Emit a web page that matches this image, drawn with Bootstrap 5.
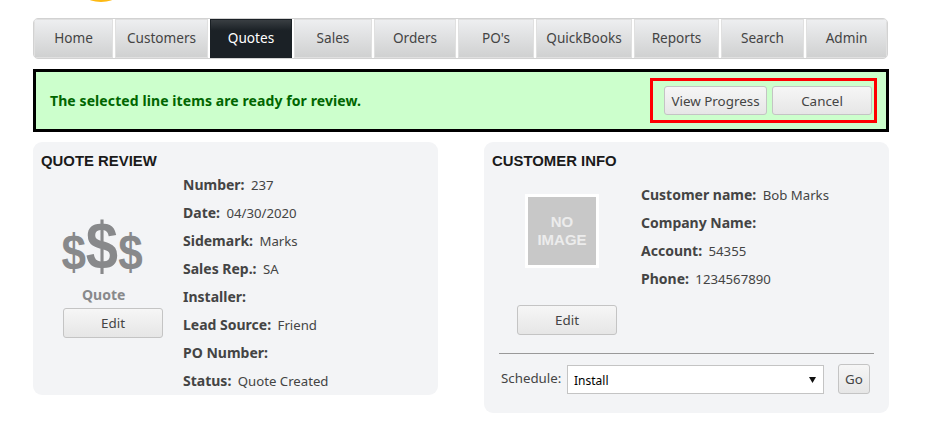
<!DOCTYPE html>
<html lang="en">
<head>
    <meta charset="UTF-8">
    <meta name="viewport" content="width=device-width, initial-scale=1.0">
    <title>Quote Review</title>
    <link href="https://cdn.jsdelivr.net/npm/bootstrap@5.3.0/dist/css/bootstrap.min.css" rel="stylesheet">
    <style>
        body {
            background-color: #fff;
            color: #444;
            font-family: "Noto Sans", "DejaVu Sans", sans-serif;
            font-size: 14px;
            overflow: hidden;
        }
        .page-wrap {
            width: 856px;
            margin-left: 33px;
        }
        .logo-strip {
            height: 18px;
            padding-left: 54px;
        }
        .logo-strip svg {
            display: block;
        }
        .main-menu {
            height: 41px;
            border: 1px solid #d2d2d2;
            border-radius: 5px;
            width: 855px;
            overflow: hidden;
        }
        .menu-item {
            display: flex;
            align-items: center;
            justify-content: center;
            color: #444;
            text-decoration: none;
            font-size: 13.6px;
            background: linear-gradient(#eeeff1, #cfd0d0);
            border-right: 2px solid #fff;
            box-shadow: inset 0 0 0 1px #e0e0e0;
        }
        .menu-item:last-child {
            border-right: 0;
        }
        .menu-item.is-current {
            background: linear-gradient(#3c4145, #1b2126 30%);
            color: #fff;
            box-shadow: inset 0 0 0 1px #1b2126;
        }
        .notice-bar {
            height: 63px;
            margin-top: 10px;
            border: 3px solid #000;
            background-color: #ccffcc;
            padding-left: 14px;
            padding-right: 9px;
        }
        .notice-text {
            color: #006600;
            font-weight: 700;
            font-size: 14px;
            letter-spacing: 0.09px;
        }
        .red-box {
            border: 3px solid #f00;
            width: 227px;
            height: 45px;
            padding-left: 11px;
            gap: 5px;
        }
        .grey-btn {
            background: linear-gradient(#f6f6f6, #e6e6e6);
            border: 1px solid #c4c4c4;
            border-radius: 3px;
            color: #444;
            font-size: 13.4px;
            padding: 0;
            height: 29px;
            line-height: 26px;
        }
        .btn-progress { width: 103px; }
        .btn-cancel { width: 100px; }
        .btn-edit { width: 100px; height: 30px; }
        .btn-go { width: 32px; height: 30px; }
        .panel-row {
            margin-top: 10px;
            gap: 46px;
        }
        .info-panel {
            width: 405px;
            flex: none;
            background-color: #f3f4f6;
            border-radius: 9px;
        }
        .panel-quote { height: 253px; padding: 11px 8px 0; }
        .panel-customer { height: 271px; padding: 11px 8px 0; }
        .panel-title {
            font-family: "Liberation Sans", Arial, sans-serif;
            font-weight: 700;
            font-size: 14.9px;
            line-height: 16px;
            color: #1a1a1a;
            margin: 0;
        }
        .side-col {
            width: 142px;
            flex: none;
        }
        .side-col-wide {
            width: 149px;
        }
        .money-mark {
            font-family: "Liberation Sans", Arial, sans-serif;
            font-weight: 700;
            color: #88898b;
            height: 68px;
            margin-top: 35px;
            margin-left: 11px;
            line-height: 68px;
            width: 100px;
            text-align: center;
            white-space: nowrap;
            transform: translateY(13px) scale(1, 1.15);
            transform-origin: bottom;
        }
        .money-small { font-size: 44px; }
        .money-big { font-size: 58px; }
        .quote-label {
            color: #88898b;
            font-weight: 700;
            font-size: 14px;
            margin: 15px 0 5px 41px;
            line-height: 16px;
        }
        .field-list {
            list-style: none;
            margin: 0;
            padding: 2px 0 0;
        }
        .field-list li {
            height: 28px;
            line-height: 28px;
            white-space: nowrap;
            font-size: 13.2px;
        }
        .field-list b {
            font-size: 14px;
            margin-right: 3px;
        }
        .customer-fields {
            padding-top: 4px;
        }
        .no-image {
            width: 74px;
            height: 74px;
            border: 3px solid #fff;
            background-color: #c8c8c8;
            color: #ececec;
            font-family: "Liberation Sans", Arial, sans-serif;
            font-weight: 700;
            font-size: 15px;
            line-height: 18px;
            margin: 17px 0 0 33px;
        }
        .edit-quote {
            margin-left: 22px;
        }
        .edit-customer {
            margin: 37px 0 0 25px;
        }
        .rule-line {
            margin: 18px 7px 0;
            border-top: 1px solid #999;
            opacity: 1;
        }
        .schedule-row {
            margin: 10px 11px 0 9px;
            font-size: 13.3px;
        }
        .schedule-label {
            width: 66px;
            flex: none;
            align-self: center;
        }
        .sched-select {
            appearance: none;
            width: 257px;
            height: 29px;
            border: 1px solid #c4c4c4;
            background: #fff url("data:image/svg+xml,%3Csvg xmlns='http://www.w3.org/2000/svg' width='7' height='7'%3E%3Cpath d='M0 1h7L3.5 7z' fill='%23111'/%3E%3C/svg%3E") no-repeat right 7px center;
            color: #000;
            font-family: "Noto Sans", sans-serif;
            font-size: 12px;
            padding: 3px 8px 0 6px;
        }
    </style>
</head>
<body>
    <div class="page-wrap">
        <div class="logo-strip">
            <svg width="28" height="2" viewBox="0 0 28 2"><ellipse cx="14" cy="-3" rx="14" ry="5" fill="#fdb913"/></svg>
        </div>

        <nav class="main-menu d-flex">
            <a class="menu-item" href="#" style="width:81px">Home</a>
            <a class="menu-item" href="#" style="width:95px">Customers</a>
            <a class="menu-item is-current" href="#" style="width:84px">Quotes</a>
            <a class="menu-item" href="#" style="width:80px">Sales</a>
            <a class="menu-item" href="#" style="width:84px">Orders</a>
            <a class="menu-item" href="#" style="width:78px">PO's</a>
            <a class="menu-item" href="#" style="width:98px">QuickBooks</a>
            <a class="menu-item" href="#" style="width:87px">Reports</a>
            <a class="menu-item" href="#" style="width:85px">Search</a>
            <a class="menu-item" href="#" style="width:81px">Admin</a>
        </nav>

        <div class="notice-bar d-flex align-items-center justify-content-between">
            <span class="notice-text">The selected line items are ready for review.</span>
            <div class="red-box d-flex align-items-center">
                <button type="button" class="btn grey-btn btn-progress">View Progress</button>
                <button type="button" class="btn grey-btn btn-cancel">Cancel</button>
            </div>
        </div>

        <div class="panel-row d-flex align-items-start">
            <section class="info-panel panel-quote">
                <h2 class="panel-title">QUOTE REVIEW</h2>
                <div class="d-flex">
                    <div class="side-col">
                        <div class="money-mark"><span class="money-small">$</span><span class="money-big">$</span><span class="money-small">$</span></div>
                        <div class="quote-label">Quote</div>
                        <button type="button" class="btn grey-btn btn-edit edit-quote d-block">Edit</button>
                    </div>
                    <ul class="field-list">
                        <li><b>Number:</b> 237</li>
                        <li><b>Date:</b> 04/30/2020</li>
                        <li><b>Sidemark:</b> Marks</li>
                        <li><b>Sales Rep.:</b> SA</li>
                        <li><b>Installer:</b></li>
                        <li><b>Lead Source:</b> Friend</li>
                        <li><b>PO Number:</b></li>
                        <li><b>Status:</b> Quote Created</li>
                    </ul>
                </div>
            </section>

            <section class="info-panel panel-customer">
                <h2 class="panel-title">CUSTOMER INFO</h2>
                <div class="d-flex mt-2">
                    <div class="side-col side-col-wide">
                        <div class="no-image d-flex align-items-center justify-content-center text-center">NO<br>IMAGE</div>
                        <button type="button" class="btn grey-btn btn-edit d-block edit-customer">Edit</button>
                    </div>
                    <ul class="field-list customer-fields">
                        <li><b>Customer name:</b> Bob Marks</li>
                        <li><b>Company Name:</b></li>
                        <li><b>Account:</b> 54355</li>
                        <li><b>Phone:</b> 1234567890</li>
                    </ul>
                </div>
                <hr class="rule-line">
                <div class="schedule-row d-flex align-items-end">
                    <span class="schedule-label">Schedule:</span>
                    <select class="sched-select me-auto">
                        <option>Install</option>
                    </select>
                    <button type="button" class="btn grey-btn btn-go">Go</button>
                </div>
            </section>
        </div>
    </div>
    <script src="https://cdn.jsdelivr.net/npm/bootstrap@5.3.0/dist/js/bootstrap.bundle.min.js"></script>
</body>
</html>
